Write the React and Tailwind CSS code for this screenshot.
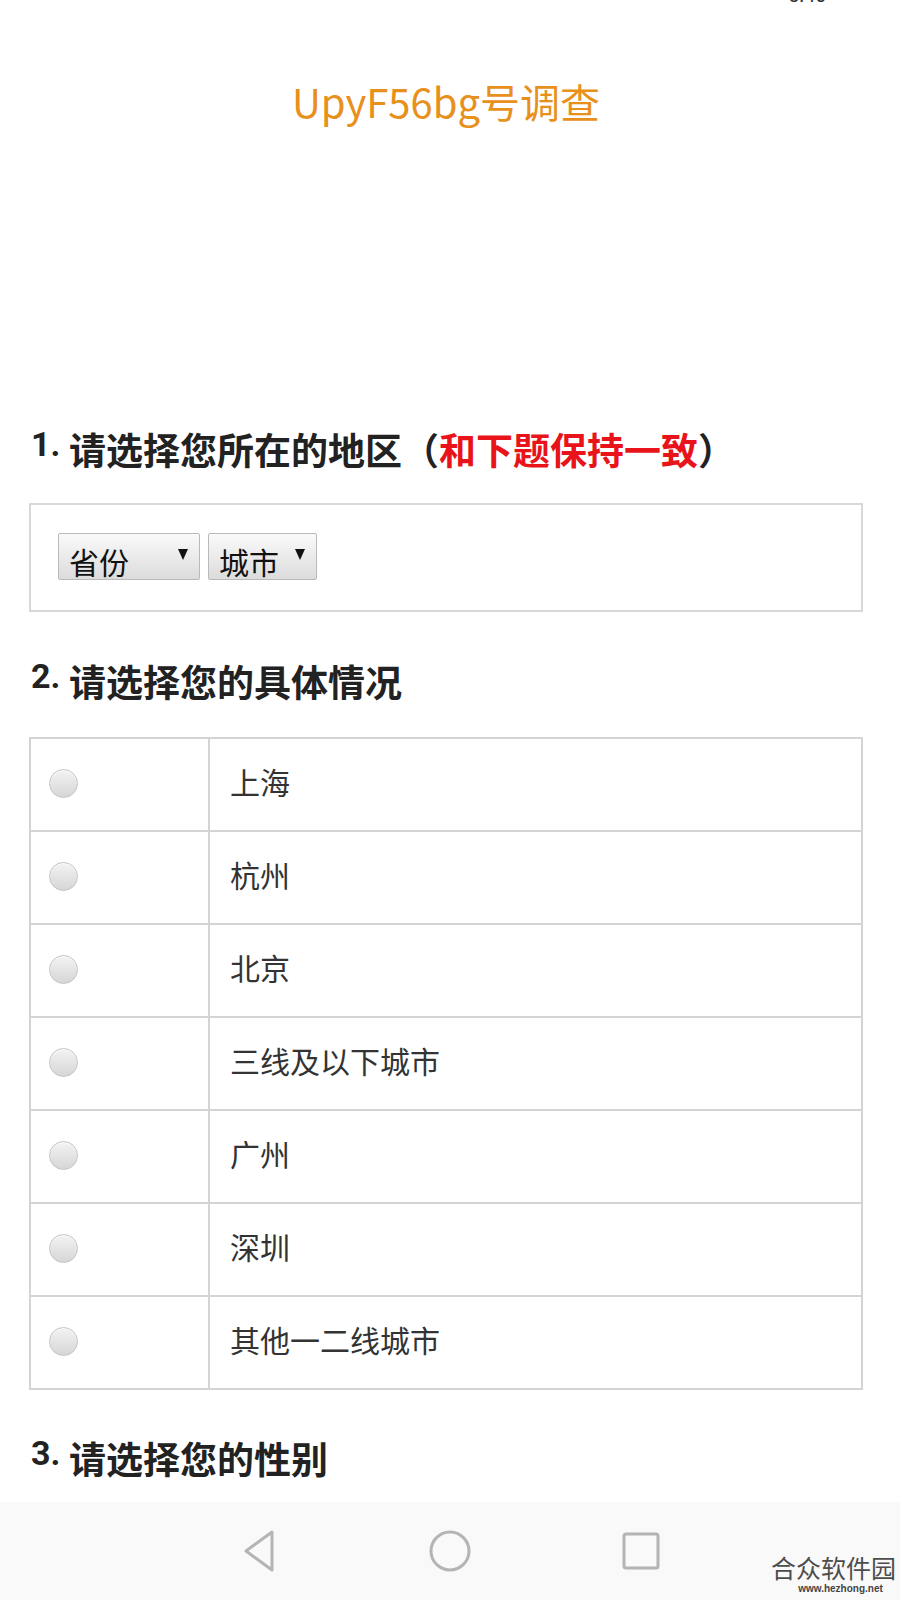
import React from "react";

const CJK = { fontFamily: '"Noto Sans CJK SC", "Noto Sans", sans-serif' };
const NUM = { fontFamily: 'Roboto, "Noto Sans", sans-serif' };

function Heading({ n, children, className = "" }) {
  return (
    <div className={"flex items-start pl-[31px] h-[44px] " + className}>
      <span style={NUM} className="w-[38px] text-[34px] leading-[34px] font-bold text-[#222]">
        {n}.
      </span>
      <span style={CJK} className="text-[37px] leading-[44px] font-bold text-[#222] whitespace-nowrap">
        {children}
      </span>
    </div>
  );
}

function Select({ label, width }) {
  return (
    <div
      className={
        "flex justify-between items-start h-[47px] pl-[10px] pr-[11px] border border-[#b9b9b9] rounded-[2px] bg-gradient-to-b from-[#fafafa] to-[#dcdcdc] " +
        width
      }
    >
      <span style={CJK} className="mt-[7px] text-[30px] leading-[40px] text-[#111]">
        {label}
      </span>
      <svg width="10" height="11" viewBox="0 0 10 11" className="mt-[15px]">
        <polygon points="0,0 10,0 5,11" fill="#111" />
      </svg>
    </div>
  );
}

function Radio() {
  return (
    <div className="w-[29px] h-[29px] rounded-full border border-[#c4c4c4] bg-gradient-to-b from-[#f3f3f3] to-[#d6d6d6] shadow-[inset_0_1px_1px_rgba(255,255,255,0.8)] mt-[-3px]" />
  );
}

const cities = ["上海", "杭州", "北京", "三线及以下城市", "广州", "深圳", "其他一二线城市"];

export default function App() {
  return (
    <div className="relative w-[900px] h-[1600px] bg-white overflow-hidden flex flex-col">
      <span style={NUM} className="absolute top-[-15px] left-[788px] text-[20px] leading-[20px] text-[#333]">
        5:40
      </span>

      <div
        style={CJK}
        className="mt-[77px] h-[48px] pr-[8px] text-center text-[40px] leading-[48px] text-[#e8901c]"
      >
        UpyF56bg号调查
      </div>

      <Heading n={1} className="mt-[302px]">
        请选择您所在的地区
        <span className="text-[#222]">（</span>
        <span className="text-[#e8141a]">和下题保持一致</span>
        <span className="text-[#222]">）</span>
      </Heading>

      <div className="ml-[29px] w-[834px] mt-[32px] border-2 border-[#d8d8d8] pt-[28px] pb-[30px] pl-[27px] flex gap-[8px]">
        <Select label="省份" width="w-[142px]" />
        <Select label="城市" width="w-[109px]" />
      </div>

      <Heading n={2} className="mt-[47px]">
        请选择您的具体情况
      </Heading>

      <div className="ml-[29px] w-[834px] mt-[34px] border-2 border-[#d4d4d4] flex flex-col">
        {cities.map((c, i) => (
          <div
            key={c}
            className={"flex h-[91px] " + (i > 0 ? "border-t-2 border-[#d4d4d4] h-[93px]" : "")}
          >
            <div className="w-[179px] border-r-2 border-[#d4d4d4] flex items-center pl-[18px]">
              <Radio />
            </div>
            <div style={CJK} className="flex items-center pl-[20px] pb-[8px] text-[30px] leading-[40px] text-[#333]">
              {c}
            </div>
          </div>
        ))}
      </div>

      <Heading n={3} className="mt-[46px]">
        请选择您的性别
      </Heading>

      <div className="mt-auto h-[98px] bg-[#f9f9f9] flex items-center justify-center gap-[147px]">
        <div className="w-[44px] h-[44px] flex items-center justify-center">
          <svg width="40" height="44" viewBox="0 0 40 44">
            <path d="M33 3 L7 22 L33 41 Z" fill="none" stroke="#b4b4b4" strokeWidth="3" strokeLinejoin="round" />
          </svg>
        </div>
        <div className="w-[44px] h-[44px] flex items-center justify-center">
          <svg width="44" height="44" viewBox="0 0 44 44">
            <circle cx="22" cy="22" r="19" fill="none" stroke="#b4b4b4" strokeWidth="3" />
          </svg>
        </div>
        <div className="w-[44px] h-[44px] flex items-center justify-center">
          <svg width="40" height="40" viewBox="0 0 40 40">
            <rect x="3" y="3" width="34" height="34" rx="2" fill="none" stroke="#b4b4b4" strokeWidth="3" />
          </svg>
        </div>
      </div>

      <div className="absolute left-[771px] top-[1552px] flex flex-col items-center">
        <span style={CJK} className="text-[25px] leading-[31px] text-[#4d4d4d]">
          合众软件园
        </span>
        <span style={{ fontFamily: '"Liberation Sans", Arial, sans-serif' }} className="text-[10px] leading-[12px] font-bold text-[#444] ml-[14px]">
          www.hezhong.net
        </span>
      </div>
    </div>
  );
}
